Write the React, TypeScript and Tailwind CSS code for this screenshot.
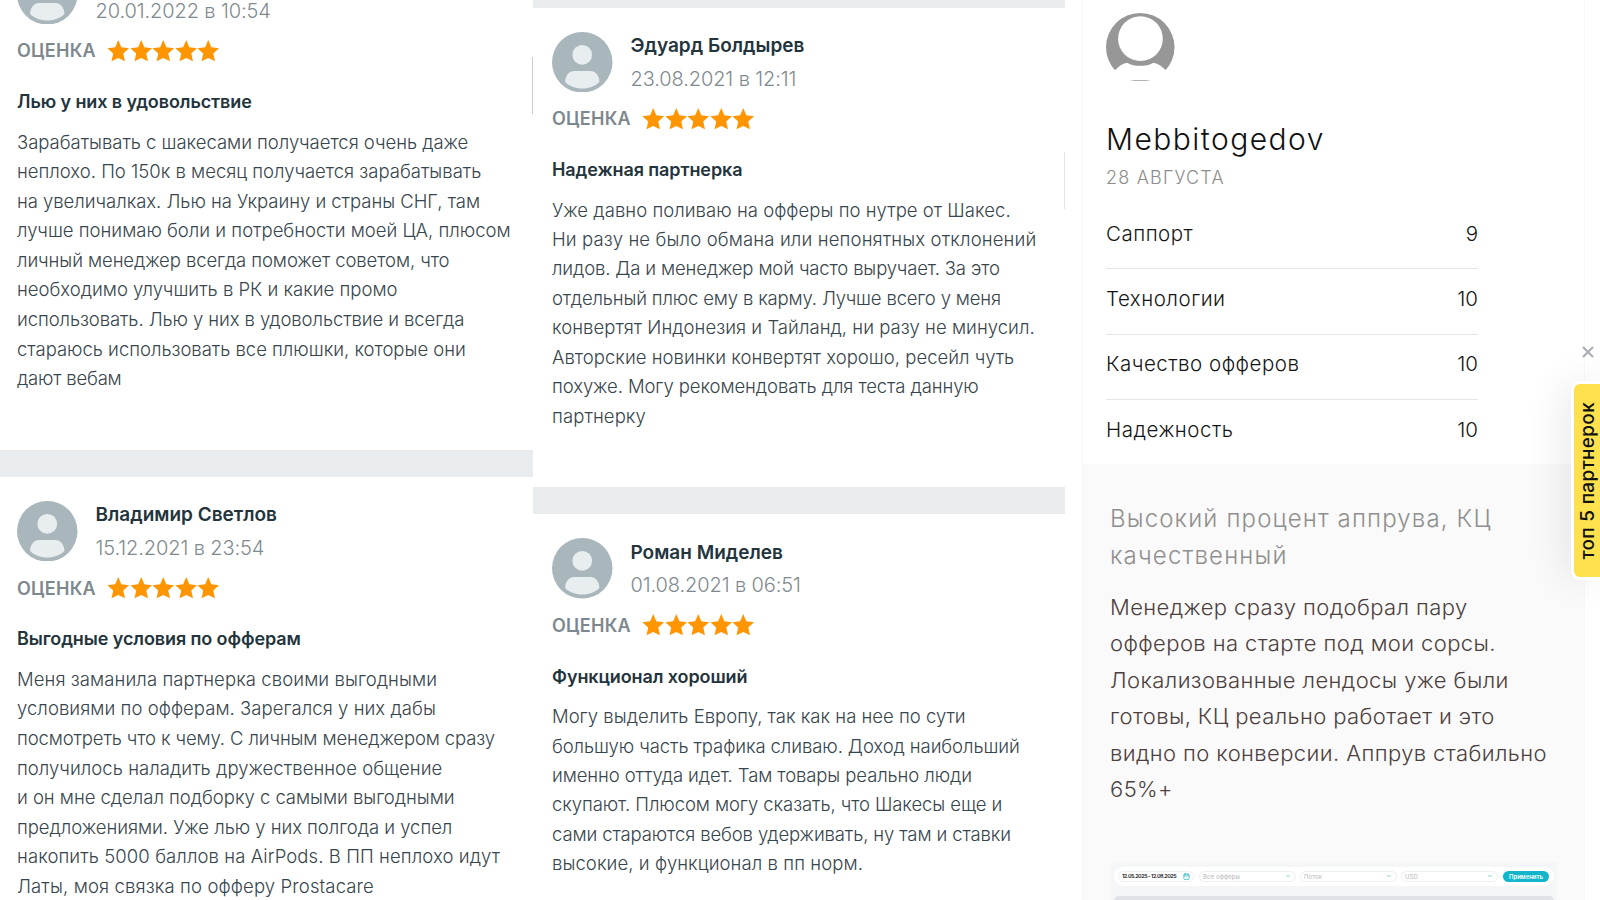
import React from "react";
import { Calendar, ChevronDown, X } from "lucide-react";

// text of a line and its tracking in px
type Line = [string, number];

type ReviewProps = {
  name?: string;
  date: string;
  title: string;
  lines: Line[];
};

const leftReviews: ReviewProps[] = [
  {
    date: "20.01.2022 в 10:54",
    title: "Лью у них в удовольствие",
    lines: [
      ["Зарабатывать с шакесами получается очень даже", -0.03],
      ["неплохо. По 150к в месяц получается зарабатывать", 0],
      ["на увеличалках. Лью на Украину и страны СНГ, там", -0.04],
      ["лучше понимаю боли и потребности моей ЦА, плюсом", 0],
      ["личный менеджер всегда поможет советом, что", -0.09],
      ["необходимо улучшить в РК и какие промо", 0],
      ["использовать. Лью у них в удовольствие и всегда", -0.09],
      ["стараюсь использовать все плюшки, которые они", -0.02],
      ["дают вебам", -0.2],
    ],
  },
  {
    name: "Владимир Светлов",
    date: "15.12.2021 в 23:54",
    title: "Выгодные условия по офферам",
    lines: [
      ["Меня заманила партнерка своими выгодными", 0.08],
      ["условиями по офферам. Зарегался у них дабы", 0.05],
      ["посмотреть что к чему. С личным менеджером сразу", -0.13],
      ["получилось наладить дружественное общение", 0.05],
      ["и он мне сделал подборку с самыми выгодными", -0.03],
      ["предложениями. Уже лью у них полгода и успел", -0.04],
      ["накопить 5000 баллов на AirPods. В ПП неплохо идут", 0.09],
      ["Латы, моя связка по офферу Prostacare", 0.13],
    ],
  },
];

const middleReviews: ReviewProps[] = [
  {
    name: "Эдуард Болдырев",
    date: "23.08.2021 в 12:11",
    title: "Надежная партнерка",
    lines: [
      ["Уже давно поливаю на офферы по нутре от Шакес.", 0.04],
      ["Ни разу не было обмана или непонятных отклонений", 0.14],
      ["лидов. Да и менеджер мой часто выручает. За это", -0.15],
      ["отдельный плюс ему в карму. Лучше всего у меня", -0.17],
      ["конвертят Индонезия и Тайланд, ни разу не минусил.", 0.04],
      ["Авторские новинки конвертят хорошо, ресейл чуть", 0.02],
      ["похуже. Могу рекомендовать для теста данную", -0.09],
      ["партнерку", 0.1],
    ],
  },
  {
    name: "Роман Миделев",
    date: "01.08.2021 в 06:51",
    title: "Функционал хороший",
    lines: [
      ["Могу выделить Европу, так как на нее по сути", 0],
      ["большую часть трафика сливаю. Доход наибольший", -0.09],
      ["именно оттуда идет. Там товары реально люди", -0.1],
      ["скупают. Плюсом могу сказать, что Шакесы еще и", -0.09],
      ["сами стараются вебов удерживать, ну там и ставки", -0.12],
      ["высокие, и функционал в пп норм.", 0.08],
    ],
  },
];

const scores = [
  { label: "Саппорт", value: 9 },
  { label: "Технологии", value: 10 },
  { label: "Качество офферов", value: 10 },
  { label: "Надежность", value: 10 },
];

const Avatar = () => (
  <svg viewBox="0 0 60 60" className="size-[60.5px] shrink-0">
    <circle cx="30" cy="30" r="30" fill="#a9b6bb" />
    <circle cx="30" cy="22.6" r="9.8" fill="#e8edf0" />
    <path
      d="M13 49.5C13 43 17 38.6 22 38.6H38C43 38.6 47 43 47 49.5C43 53.5 37 56 30 56C23 56 17 53.5 13 49.5Z"
      fill="#e8edf0"
    />
  </svg>
);

const Star = () => (
  <svg viewBox="0 0 22 22" className="size-[22.5px]">
    <path
      d="M11 0L14 7.2L21.6 8L15.9 13.1L17.6 20.8L11 17.7L4.4 20.8L6.1 13.1L.4 8L8 7.2Z"
      fill="#ff9500"
    />
  </svg>
);

const Review = ({ name, date, title, lines }: ReviewProps) => {
  return (
    <article className="border-t-[27px] border-[#e8ecef] pt-6 pb-14">
      <div className="flex h-[61.5px] gap-[18px]">
        <Avatar />
        <div className="whitespace-nowrap text-[20px]">
          <h3 className="h-[34px] pt-[0.5px] text-[19px] font-semibold leading-7 text-[#24343c]">
            {name}
          </h3>
          <p className="font-light leading-[26px] tracking-[-0.1px] text-[#7f8a90]">
            {date}
          </p>
        </div>
      </div>
      <div className="flex h-[52px] items-center gap-[11px]">
        <span className="w-[79px] text-[18px] font-semibold tracking-[0.25px] text-[#7d888e]">
          ОЦЕНКА
        </span>
        <div className="flex">
          <Star />
          <Star />
          <Star />
          <Star />
          <Star />
        </div>
      </div>
      <h4 className="h-[50.5px] whitespace-nowrap pt-[10px] text-[18px] font-semibold leading-[29px] tracking-[-0.1px] text-[#24343c]">
        {title}
      </h4>
      <div className="whitespace-nowrap text-[18.5px] font-light text-[#37454c]">
        {lines.map(([text, tracking]) => (
          <p key={text} style={{ letterSpacing: tracking }}>
            {text}
          </p>
        ))}
      </div>
    </article>
  );
};

const Select = ({ label }: { label: string }) => (
  <div className="flex h-[11px] w-[97px] items-center justify-between rounded-full border border-[#edf0f2] pr-1 pl-[3px] text-[6px] tracking-[0.1px] text-[#b4b8bc]">
    {label}
    <ChevronDown size={6} strokeWidth={3} color="#5cc3c6" />
  </div>
);

const Dashboard = () => (
  <div className="mt-[54px] ml-[28px] h-[39px] w-[446px] bg-[#f5f6f8] px-[3px] pt-[5px]">
    <div className="flex h-[19px] w-[440px] items-center rounded-full bg-white pl-[4px]">
      <div className="mr-[5px] flex h-[11px] w-[76px] items-center justify-between whitespace-nowrap rounded-full border border-[#edf0f2] px-[3px] text-[5.4px] font-semibold tracking-[-0.43px] text-[#15181b]">
        12.05.2025 - 12.08.2025
        <Calendar size={7} strokeWidth={2.6} color="#37b8be" />
      </div>
      <div className="flex gap-1">
        <Select label="Все офферы" />
        <Select label="Поток" />
        <Select label="USD" />
      </div>
      <div className="ml-[5px] flex h-[11px] w-[46px] items-center justify-center rounded-full bg-[#12b5c9] text-[6px] font-semibold text-white">
        Применить
      </div>
    </div>
    <div className="mt-[10px] h-[5px] rounded-t-md bg-[#dfe2e7]" />
  </div>
);

const Profile = () => {
  return (
    <section className="ml-[17px] w-[503px] border-x border-[#f8f8f8]">
      <div className="h-[464px] pt-[12.5px] pl-[23px]">
        <svg viewBox="0 0 68 68" className="size-[68.5px]">
          <circle cx="34" cy="34" r="34" fill="#979797" />
          <circle cx="34.2" cy="25.5" r="22.2" fill="#fff" />
          <path
            d="M0 66.7L8.6 57.2C12 53.2 16 50.3 21 49.3C28 53.5 40 53.5 47 49.3C52 50.3 56 53.2 59.8 57.2L68 66.7Z"
            fill="#fff"
          />
        </svg>
        <h2 className="mt-10 text-[30px] font-light leading-9 tracking-[1.45px] text-[#111]">
          Mebbitogedov
        </h2>
        <p className="mt-[9px] text-[18px] font-light leading-6 tracking-[1.2px] text-[#8d8d8d]">
          28 АВГУСТА
        </p>
        <div className="mt-[14px] w-[372px] text-[20.5px] font-light tracking-[0.5px] text-[#151515]">
          {scores.map(({ label, value }) => (
            <div
              key={label}
              className="flex h-[65.3px] items-center justify-between border-b border-[#e6e6e6] pb-1 last:border-0 last:pb-[5px]"
            >
              <span>{label}</span>
              <span className="tracking-normal">{value}</span>
            </div>
          ))}
        </div>
      </div>
      <div className="h-[436px] bg-[#fafafa] pt-[37px]">
        <h3 className="pl-[27px] text-[24px] font-light leading-[36.5px] tracking-[1.15px] text-[#8f8f8f]">
          Высокий процент аппрува, КЦ
          <br />
          качественный
        </h3>
        <p className="mt-[14.5px] whitespace-nowrap pl-[27px] text-[22px] font-light leading-[36.5px] tracking-[0.4px] text-[#4c3f40]">
          Менеджер сразу подобрал пару
          <br />
          офферов на старте под мои сорсы.
          <br />
          Локализованные лендосы уже были
          <br />
          готовы, КЦ реально работает и это
          <br />
          видно по конверсии. Аппрув стабильно
          <br />
          65%+
        </p>
        <Dashboard />
      </div>
    </section>
  );
};

const TopPartners = () => (
  <aside className="absolute top-[344px] right-0 w-[26px]">
    <X size={18} strokeWidth={2.6} color="#a9adb3" className="-mt-px ml-[5px]" />
    <div className="mt-[23px] flex h-[193px] items-center justify-center rounded-l-md bg-[#ffe14d] shadow-[0_0_0_3px_#fff,-6px_0_40px_rgba(0,0,0,0.12)]">
      <span className="ml-0.5 rotate-180 whitespace-nowrap text-[19px] font-medium tracking-[0.3px] text-[#111] [writing-mode:vertical-rl]">
        топ 5 партнерок
      </span>
    </div>
  </aside>
);

const App = () => {
  return (
    <main className="relative flex h-[900px] w-[1600px] overflow-hidden bg-white font-['Inter','Noto_Sans',sans-serif]">
      <div className="w-[533px] leading-[29.6px]">
        <div className="-mt-[87.5px]">
          {leftReviews.map((review) => (
            <div key={review.title} className="[&>article]:pl-[17px]">
              <Review {...review} />
            </div>
          ))}
        </div>
      </div>
      <div className="w-[532px] leading-[29.45px]">
        <div className="-mt-[19.5px]">
          {middleReviews.map((review) => (
            <div key={review.title} className="[&>article]:pl-[19px]">
              <Review {...review} />
            </div>
          ))}
        </div>
      </div>
      <Profile />
      <div className="absolute top-[57px] left-[532px] h-[57px] w-px bg-[#c9cccf]" />
      <div className="absolute top-[152px] left-[1064px] h-[57px] w-px bg-[#e2e4e6]" />
      <TopPartners />
    </main>
  );
};

export default App;
